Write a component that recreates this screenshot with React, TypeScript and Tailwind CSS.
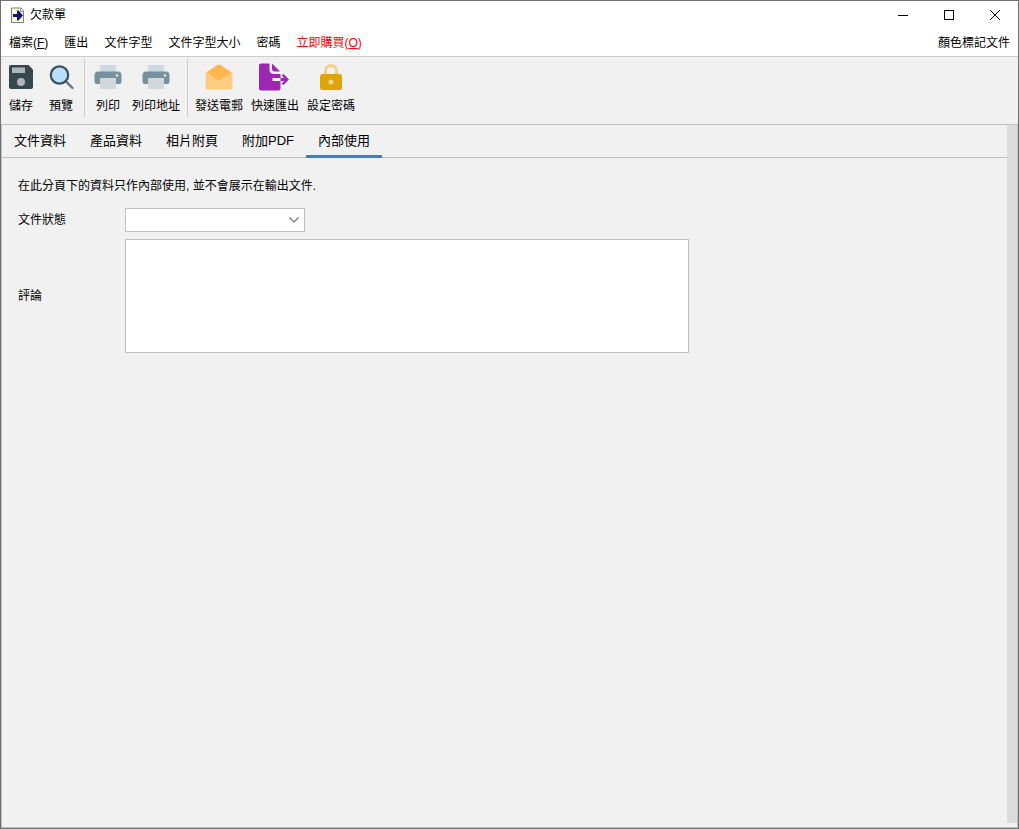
import { useState, type ReactNode } from "react";

const menus: { label: string; accessKey?: string; highlight?: boolean }[] = [
  { label: "檔案", accessKey: "F" },
  { label: "匯出" },
  { label: "文件字型" },
  { label: "文件字型大小" },
  { label: "密碼" },
  { label: "立即購買", accessKey: "O", highlight: true },
];

const tabs = ["文件資料", "產品資料", "相片附頁", "附加PDF", "內部使用"];

function AppIcon() {
  return (
    <svg width="14" height="16" viewBox="0 0 14 16" aria-hidden="true">
      <path d="M0.500 1H10L12.500 3.500V15.500H0.500Z" fill="#fcfbd0" stroke="#7c7c9c" />
      <path d="M9.500 1.500V4.500H12.500" fill="#fff" stroke="#8c8ca4" />
      <path d="M2 7H6V3.500H7.500L12 8.500L7.500 13.500H6V10H2Z" fill="#14146e" />
    </svg>
  );
}

function SaveIcon() {
  return (
    <svg width="24" height="24" viewBox="0 0 24 24" aria-hidden="true">
      <path d="M2 0H19.500L24 4.500V22A2 2 0 0 1 22 24H2A2 2 0 0 1 0 22V2A2 2 0 0 1 2 0Z" fill="#37474f" />
      <path d="M3 2.500H16V8H3Z" fill="#b0b7bb" />
      <circle cx="12" cy="17" r="4" fill="#b0b7bb" />
    </svg>
  );
}

function PreviewIcon() {
  return (
    <svg width="26" height="26" viewBox="0 0 26 26" className="translate-x-px" aria-hidden="true">
      <path d="M17 17.500L23.500 24" stroke="#5d7480" strokeWidth="2.400" strokeLinecap="round" />
      <circle cx="10.500" cy="11" r="8.700" fill="#bbdefb" stroke="#37505d" strokeWidth="2.200" />
    </svg>
  );
}

function PrinterIcon() {
  return (
    <svg width="28" height="24" viewBox="0 0 28 24" aria-hidden="true">
      <path d="M6 0H22V7H6Z" fill="#cfd8dc" />
      <path d="M4 6.500H24A3.500 3.500 0 0 1 27.500 10V17A2 2 0 0 1 25.500 19H2.500A2 2 0 0 1 0.500 17V10A3.500 3.500 0 0 1 4 6.500Z" fill="#78909c" />
      <path d="M6 13H22V24H6Z" fill="#cfd8dc" />
      <circle cx="23" cy="10.500" r="1.300" fill="#cfe9f2" />
    </svg>
  );
}

function MailIcon() {
  return (
    <svg width="28" height="26" viewBox="0 0 28 26" aria-hidden="true">
      <path d="M0.500 9L14 1L27.500 9V23.500A2 2 0 0 1 25.500 25.500H2.500A2 2 0 0 1 0.500 23.500Z" fill="#ffcc80" />
      <path d="M1.500 8.300L12.500 0.900Q14 0.200 15.500 0.900L26.500 8.300L14 16.500Z" fill="#ffb74d" />
    </svg>
  );
}

function ExportIcon() {
  return (
    <svg width="32" height="28" viewBox="0 0 32 28" aria-hidden="true">
      <path
        d="M2 0.500H10.500V6.500Q10.500 11 15 11H21.500V15H13.500V18H21.500V25.500A2 2 0 0 1 19.500 27.500H2A2 2 0 0 1 0 25.500V2.500A2 2 0 0 1 2 0.500Z"
        fill="#9c27b0"
      />
      <path d="M13 0.500L21 8.500H16Q13 8.500 13 5.500Z" fill="#9c27b0" />
      <path d="M21.500 15H25.200L22.700 12.500L24.500 11L30 16.500L24.500 22L22.700 20.500L25.200 18H21.500Z" fill="#9c27b0" />
    </svg>
  );
}

function LockIcon() {
  return (
    <svg width="24" height="26" viewBox="0 0 24 26" aria-hidden="true">
      <path d="M6.500 12V7A5.500 5.500 0 0 1 17.500 7V12" fill="none" stroke="#f0d083" strokeWidth="3" />
      <rect x="1" y="10" width="22" height="16" rx="2.500" fill="#e0a30c" />
      <circle cx="12" cy="18" r="2.500" fill="#f3d58c" />
    </svg>
  );
}

function ToolButton({ label, children }: { label: string; children: ReactNode }) {
  return (
    <button type="button" className="flex min-w-10 flex-col items-center px-1 hover:bg-[#e3e3e3]">
      <span className="flex h-9 items-center justify-center">{children}</span>
      <span className="mt-[3px] leading-4">{label}</span>
    </button>
  );
}

function Separator() {
  return <span className="mx-[3px] w-px self-stretch bg-[#cccccc]" />;
}

export default function App() {
  const [active, setActive] = useState(4);

  return (
    <div className="flex min-h-screen flex-col border border-[#707070] bg-[#f1f1f1] font-['Liberation_Sans','Noto_Sans_CJK_TC',sans-serif] text-xs text-black">
      <header className="flex h-7 items-center justify-between bg-white">
        <h1 className="flex items-center gap-[5px] pl-[10px] leading-4">
          <AppIcon />
          欠款單
        </h1>
        <div className="flex self-stretch">
          <button type="button" aria-label="最小化" className="flex w-[46px] items-center justify-center">
            <svg width="10" height="10" viewBox="0 0 10 10" shapeRendering="crispEdges">
              <path d="M0 5.500H10" stroke="#000" />
            </svg>
          </button>
          <button type="button" aria-label="最大化" className="flex w-[46px] items-center justify-center">
            <svg width="10" height="10" viewBox="0 0 10 10" shapeRendering="crispEdges">
              <path d="M0.500 0.500H9.500V9.500H0.500Z" fill="none" stroke="#000" />
            </svg>
          </button>
          <button type="button" aria-label="關閉" className="flex w-[46px] items-center justify-center">
            <svg width="10" height="10" viewBox="0 0 10 10">
              <path d="M0 0L10 10M10 0L0 10" stroke="#000" />
            </svg>
          </button>
        </div>
      </header>

      <nav className="flex h-7 items-center justify-between border-b border-[#cccccc] bg-white px-2 leading-4">
        <div className="flex gap-4">
          {menus.map((menu) => (
            <button key={menu.label} type="button" className={menu.highlight ? "text-[#ff0000]" : ""}>
              {menu.label}
              {menu.accessKey && (
                <>
                  (<span className="underline">{menu.accessKey}</span>)
                </>
              )}
            </button>
          ))}
        </div>
        <button type="button">顏色標記文件</button>
      </nav>

      <div className="flex h-[68px] items-start border-b border-[#c0c0c0] pt-[2px] pb-[7px]">
        <ToolButton label="儲存"><SaveIcon /></ToolButton>
        <ToolButton label="預覽"><PreviewIcon /></ToolButton>
        <Separator />
        <ToolButton label="列印"><PrinterIcon /></ToolButton>
        <ToolButton label="列印地址"><PrinterIcon /></ToolButton>
        <Separator />
        <ToolButton label="發送電郵"><MailIcon /></ToolButton>
        <ToolButton label="快速匯出"><ExportIcon /></ToolButton>
        <ToolButton label="設定密碼"><LockIcon /></ToolButton>
      </div>

      <div className="flex grow border-x border-b border-[#c0c0c0]">
        <main className="min-w-0 grow">
          <div role="tablist" className="flex h-[33px] border-b border-[#c0c0c0] text-[13px]">
            {tabs.map((tab, index) => (
              <button
                key={tab}
                type="button"
                role="tab"
                aria-selected={index === active}
                onClick={() => setActive(index)}
                className={
                  index === active
                    ? "-mb-px border-b-3 border-[#3d80c6] px-3 pt-[2px] leading-7"
                    : "-mb-px border-b-3 border-transparent px-3 pt-[2px] leading-7"
                }
              >
                {tab}
              </button>
            ))}
          </div>

          <div className="px-4 pt-5">
            <p className="leading-4">在此分頁下的資料只作內部使用, 並不會展示在輸出文件.</p>
            <div className="mt-[14px] flex items-center">
              <label htmlFor="status" className="w-[107px] shrink-0 leading-4">文件狀態</label>
              <div className="grid w-[180px] items-center">
                <select
                  id="status"
                  className="col-start-1 row-start-1 h-6 w-full appearance-none border border-[#c0c0c0] bg-white px-1 outline-none"
                  defaultValue=""
                >
                  <option value=""></option>
                </select>
                <svg
                  width="10"
                  height="6"
                  viewBox="0 0 10 6"
                  className="pointer-events-none col-start-1 row-start-1 mr-[6px] justify-self-end"
                  aria-hidden="true"
                >
                  <path d="M0.500 0.500L5 5L9.500 0.500" fill="none" stroke="#707070" strokeWidth="1.200" />
                </svg>
              </div>
            </div>
            <div className="mt-[7px] flex items-center">
              <label htmlFor="comment" className="w-[107px] shrink-0 leading-4">評論</label>
              <textarea
                id="comment"
                className="h-[114px] w-[564px] min-w-0 resize-none border border-[#c0c0c0] bg-white p-1 outline-none"
              />
            </div>
          </div>
        </main>
        <div className="mb-1 w-[10px] shrink-0 bg-[#dbdbdb]" />
      </div>
    </div>
  );
}
